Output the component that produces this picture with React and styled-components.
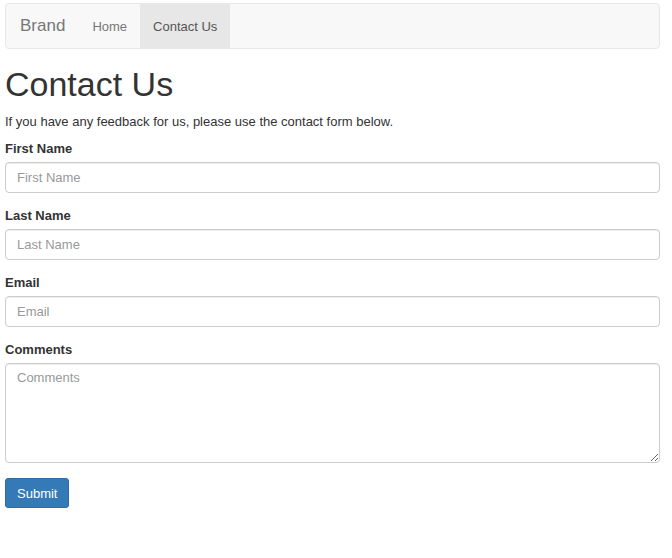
import React from "react";
import styled, { createGlobalStyle } from "styled-components";

const Global = createGlobalStyle`
  body {
    margin: 0;
    font-family: "Liberation Sans", Arial, sans-serif;
    font-size: 13px;
    color: #333;
    background: #fff;
  }
  * { box-sizing: border-box; }
`;

const Page = styled.div`
  padding: 3px 12px 20px 5px;
`;

const Navbar = styled.nav`
  display: flex;
  align-items: stretch;
  height: 46px;
  background: #f8f8f8;
  border: 1px solid #e7e7e7;
  border-radius: 4px;
`;

const Brand = styled.a`
  display: flex;
  align-items: center;
  padding: 0 14px;
  font-size: 17px;
  color: #777;
`;

const NavLink = styled.a`
  display: flex;
  align-items: center;
  padding: 0 13px;
  font-size: 13px;
  color: ${(p) => (p.$active ? "#555" : "#777")};
  background: ${(p) => (p.$active ? "#e7e7e7" : "transparent")};
`;

const Title = styled.h1`
  margin: 17px 0 10px;
  font-size: 34px;
  font-weight: 400;
  line-height: 1.1;
`;

const Intro = styled.p`
  margin: 0 0 9px;
  line-height: 18px;
`;

const Group = styled.div`
  margin-bottom: 14px;
`;

const Label = styled.label`
  display: block;
  font-weight: 700;
  line-height: 18px;
  margin-bottom: 4px;
`;

const fieldCss = `
  display: block;
  width: 100%;
  padding: 6px 11px;
  font-family: "Liberation Sans", Arial, sans-serif;
  font-size: 13px;
  color: #555;
  background: #fff;
  border: 1px solid #ccc;
  border-radius: 4px;
  box-shadow: inset 0 1px 1px rgba(0,0,0,.075);
  &::placeholder { color: #999; }
`;

const Input = styled.input`
  ${fieldCss}
  height: 31px;
`;

const TextArea = styled.textarea`
  ${fieldCss}
  height: 100px;
  resize: vertical;
`;

const Submit = styled.button`
  margin-top: 1px;
  height: 30px;
  padding: 0 11px;
  font-family: "Liberation Sans", Arial, sans-serif;
  font-size: 13px;
  color: #fff;
  background: #337ab7;
  border: 1px solid #2e6da4;
  border-radius: 3px;
`;

const fields = ["First Name", "Last Name", "Email"];

export default function App() {
  return (
    <Page>
      <Global />
      <Navbar>
        <Brand>Brand</Brand>
        <NavLink>Home</NavLink>
        <NavLink $active>Contact Us</NavLink>
      </Navbar>
      <Title>Contact Us</Title>
      <Intro>If you have any feedback for us, please use the contact form below.</Intro>
      {fields.map((f) => (
        <Group key={f}>
          <Label>{f}</Label>
          <Input placeholder={f} />
        </Group>
      ))}
      <Group>
        <Label>Comments</Label>
        <TextArea placeholder="Comments" />
      </Group>
      <Submit>Submit</Submit>
    </Page>
  );
}
